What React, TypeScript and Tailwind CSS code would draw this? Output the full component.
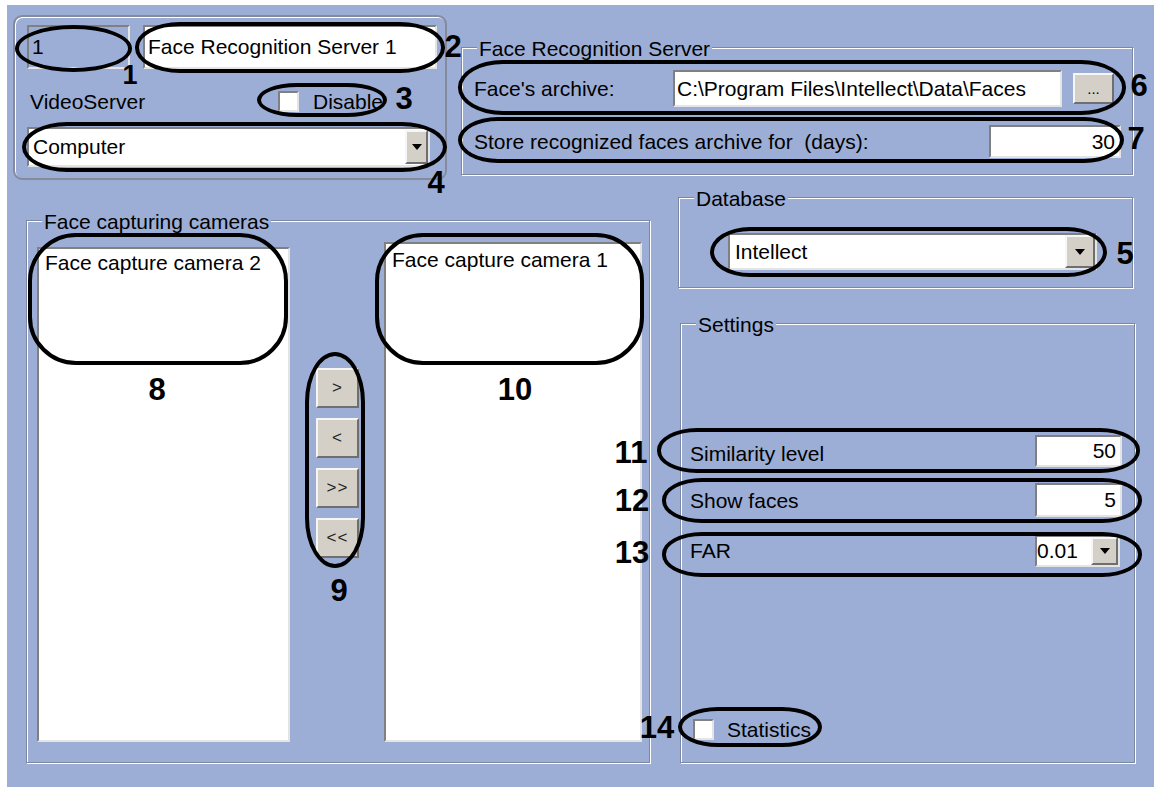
import type { ReactNode } from 'react';

const sunken =
  'border-2 border-t-[#808080] border-l-[#808080] border-b-[#e4e4e4] border-r-[#e4e4e4]';
const raised =
  'border-2 border-t-[#f6f6f6] border-l-[#f6f6f6] border-b-[#6f6f6f] border-r-[#6f6f6f]';

function Group({
  title,
  className,
  children,
}: {
  title: string;
  className: string;
  children?: ReactNode;
}) {
  return (
    <div
      className={`relative border border-[#7d879f] shadow-[inset_1px_1px_0_#ffffff,1px_1px_0_#ffffff] ${className}`}
    >
      <span className="absolute left-[15px] top-0 -translate-y-1/2 bg-[#9caed6] px-[2px] leading-none">
        {title}
      </span>
      {children}
    </div>
  );
}

function DropButton({ className }: { className: string }) {
  return (
    <div className={`flex items-center justify-center bg-[#d4d0c8] ${raised} ${className}`}>
      <svg width="10" height="6" viewBox="0 0 10 6">
        <path d="M0 0h10L5 6z" fill="#000" />
      </svg>
    </div>
  );
}

function CheckBox() {
  return <div className={`w-[21px] h-[21px] bg-white ${sunken}`} />;
}

function MoveButton({ label }: { label: string }) {
  return (
    <div
      className={`h-[40px] w-[43px] flex items-center justify-center bg-[#d4d0c8] ${raised} text-[17px] text-[#222] tracking-[1px]`}
    >
      {label}
    </div>
  );
}

const ovals = [
  'left-[8px] top-[20px] w-[117px] h-[47px] rounded-[50%]',
  'left-[128px] top-[17px] w-[310px] h-[51px] rounded-[45px/25px]',
  'left-[250px] top-[78px] w-[130px] h-[34px] rounded-[40px/17px]',
  'left-[15px] top-[117px] w-[425px] h-[50px] rounded-[45px/25px]',
  'left-[451px] top-[55px] w-[668px] h-[55px] rounded-[45px/27px]',
  'left-[451px] top-[112px] w-[666px] h-[46px] rounded-[40px/23px]',
  'left-[703px] top-[222px] w-[397px] h-[50px] rounded-[40px/25px]',
  'left-[21px] top-[228px] w-[260px] h-[132px] rounded-[48px]',
  'left-[368px] top-[228px] w-[269px] h-[132px] rounded-[48px]',
  'left-[298px] top-[347px] w-[60px] h-[216px] rounded-[30px/50px]',
  'left-[650px] top-[423px] w-[483px] h-[45px] rounded-[40px/22px]',
  'left-[655px] top-[473px] w-[480px] h-[45px] rounded-[40px/22px]',
  'left-[655px] top-[527px] w-[480px] h-[45px] rounded-[40px/22px]',
  'left-[671px] top-[702px] w-[144px] h-[40px] rounded-[40px/20px]',
];

const numbers: [string, string][] = [
  ['1', 'left-[123px] top-[70px] text-[27px]'],
  ['2', 'left-[446px] top-[41px] text-[31px]'],
  ['3', 'left-[397px] top-[93px] text-[31px]'],
  ['4', 'left-[429px] top-[177px] text-[31px]'],
  ['6', 'left-[1132px] top-[80px] text-[31px]'],
  ['7', 'left-[1129px] top-[133px] text-[31px]'],
  ['5', 'left-[1118px] top-[248px] text-[31px]'],
  ['8', 'left-[150px] top-[384px] text-[31px]'],
  ['10', 'left-[508px] top-[384px] text-[31px]'],
  ['9', 'left-[332px] top-[585px] text-[31px]'],
  ['11', 'left-[624px] top-[447px] text-[31px]'],
  ['12', 'left-[625px] top-[495px] text-[31px]'],
  ['13', 'left-[625px] top-[547px] text-[31px]'],
  ['14', 'left-[650px] top-[722px] text-[31px]'],
];

export default function App() {
  return (
    <div className="w-[1157px] h-[787px] bg-white pl-[7px] pt-[5px] font-['Liberation_Sans',Arial,sans-serif] text-[21px] text-black">
      <div className="relative w-[1147px] h-[782px] bg-[#9caed6] overflow-hidden">
        {/* top row */}
        <div className="flex items-start pt-[10px] pl-[6px]">
          <div className="w-[434px] h-[165px] rounded-[9px] border-2 border-[#858b9c] shadow-[inset_1px_1px_0_#ffffff] pl-[12px] pt-[8px]">
            <div className="flex">
              <div className={`w-[103px] h-[44px] bg-[#9caed6] ${sunken} flex items-center pl-[3px]`}>
                1
              </div>
              <div className={`ml-[13px] w-[294px] h-[44px] bg-white ${sunken} flex items-center pl-[3px]`}>
                Face Recognition Server 1
              </div>
            </div>
            <div className="mt-[19px] h-[26px] flex items-center leading-none">
              <span className="ml-[3px] w-[248px]">VideoServer</span>
              <CheckBox />
              <span className="ml-[14px]">Disable</span>
            </div>
            <div className={`mt-[13px] w-[403px] h-[40px] bg-white ${sunken} flex items-stretch`}>
              <span className="flex-1 flex items-center pl-[4px]">Computer</span>
              <DropButton className="w-[23px] my-[1px]" />
            </div>
          </div>

          <Group title="Face Recognition Server" className="ml-[14px] mt-[32px] w-[672px] h-[128px] pl-[12px] pt-[22px]">
            <div className="flex items-center">
              <span className="w-[199px]">Face's archive:</span>
              <div className={`w-[389px] h-[37px] bg-white ${sunken} flex items-center pl-[2px]`}>
                C:\Program Files\Intellect\Data\Faces
              </div>
              <div className={`ml-[11px] w-[41px] h-[31px] bg-[#d4d0c8] ${raised} flex items-center justify-center text-[15px] leading-none`}>
                ...
              </div>
            </div>
            <div className="mt-[18px] flex items-center">
              <span className="w-[515px] whitespace-pre">Store recognized faces archive for  (days):</span>
              <div className={`w-[132px] h-[33px] bg-white ${sunken} flex items-center justify-end pr-[4px]`}>
                30
              </div>
            </div>
          </Group>
        </div>

        {/* bottom row */}
        <div className="flex items-start mt-[17px]">
          <Group title="Face capturing cameras" className="ml-[19px] mt-[23px] w-[624px] h-[543px] pl-[10px] pt-[21px]">
            <div className="flex items-start">
              <div className={`mt-[5px] w-[253px] h-[495px] bg-white ${sunken} pl-[6px] pt-[2px] leading-[24px]`}>
                Face capture camera 2
              </div>
              <div className="ml-[26px] mt-[126px] flex flex-col gap-[10px]">
                <MoveButton label=">" />
                <MoveButton label="<" />
                <MoveButton label=">>" />
                <MoveButton label="<<" />
              </div>
              <div className={`ml-[25px] w-[258px] h-[500px] bg-white ${sunken} pl-[6px] pt-[4px] leading-[24px]`}>
                Face capture camera 1
              </div>
            </div>
          </Group>

          <div className="ml-[28px] w-[457px]">
            <Group title="Database" className="w-[455px] h-[91px] pl-[49px] pt-[35px]">
              <div className={`w-[369px] h-[37px] bg-white ${sunken} flex items-stretch`}>
                <span className="flex-1 flex items-center pl-[5px]">Intellect</span>
                <DropButton className="w-[30px]" />
              </div>
            </Group>

            <Group title="Settings" className="mt-[35px] ml-[2px] w-[455px] h-[440px] pl-[9px] pt-[111px]">
              <div className="flex items-center h-[32px]">
                <span className="w-[345px] pt-[6px]">Similarity level</span>
                <div className={`w-[87px] h-[32px] bg-white ${sunken} flex items-center justify-end pr-[4px]`}>
                  50
                </div>
              </div>
              <div className="mt-[16px] flex items-center h-[34px]">
                <span className="w-[345px] pt-[2px]">Show faces</span>
                <div className={`w-[87px] h-[34px] bg-white ${sunken} flex items-center justify-end pr-[4px]`}>
                  5
                </div>
              </div>
              <div className="mt-[18px] flex items-center h-[32px]">
                <span className="w-[345px]">FAR</span>
                <div className={`w-[85px] h-[32px] bg-white ${sunken} flex items-stretch`}>
                  <span className="flex-1 flex items-center">0.01</span>
                  <DropButton className="w-[27px]" />
                </div>
              </div>
              <div className="mt-[147px] ml-[3px] flex items-center">
                <CheckBox />
                <span className="ml-[13px]">Statistics</span>
              </div>
            </Group>
          </div>
        </div>

        {/* annotations */}
        {ovals.map((c, i) => (
          <div key={i} className={`absolute border-[4px] border-black pointer-events-none ${c}`} />
        ))}
        {numbers.map(([n, c]) => (
          <span
            key={n}
            className={`absolute -translate-x-1/2 -translate-y-1/2 font-bold leading-none ${c}`}
          >
            {n}
          </span>
        ))}
      </div>
    </div>
  );
}
